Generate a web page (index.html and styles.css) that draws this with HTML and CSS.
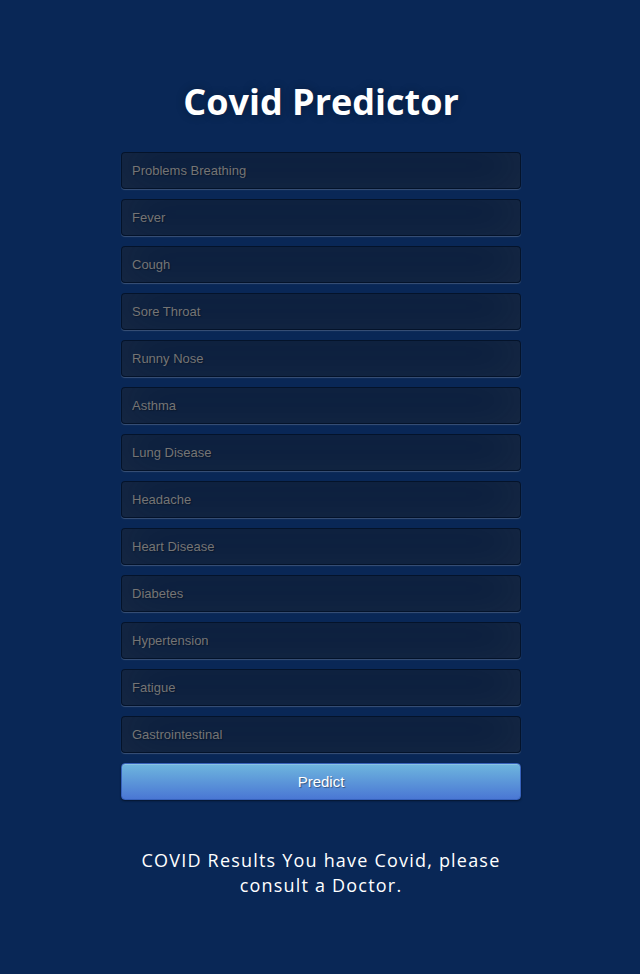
FILE: index.html
```
<!DOCTYPE html>
<html>
<head>
<meta charset="utf-8">
<title>Covid Predictor</title>
<link rel="stylesheet" href="styles.css">
</head>
<body>
<div class="login">
  <h1 class="title">Covid Predictor</h1>
  <form class="form">
    <input class="field" type="text" placeholder="Problems Breathing">
    <input class="field" type="text" placeholder="Fever">
    <input class="field" type="text" placeholder="Cough">
    <input class="field" type="text" placeholder="Sore Throat">
    <input class="field" type="text" placeholder="Runny Nose">
    <input class="field" type="text" placeholder="Asthma">
    <input class="field" type="text" placeholder="Lung Disease">
    <input class="field" type="text" placeholder="Headache">
    <input class="field" type="text" placeholder="Heart Disease">
    <input class="field" type="text" placeholder="Diabetes">
    <input class="field" type="text" placeholder="Hypertension">
    <input class="field" type="text" placeholder="Fatigue">
    <input class="field" type="text" placeholder="Gastrointestinal">
    <button class="btn" type="button">Predict</button>
  </form>
  <p class="result">COVID Results You have Covid, please consult a Doctor.</p>
</div>
</body>
</html>
```
FILE: styles.css
```
html, body {
  margin: 0;
  padding: 0;
  height: 100%;
}
body {
  background: #092756;
  font-family: "Open Sans", sans-serif;
}
.login {
  width: 400px;
  margin: 0 auto;
  padding-top: 78px;
  transform: translateX(1px);
}
.title {
  margin: 0 0 26px;
  color: #fff;
  font-size: 36px;
  font-weight: 700;
  line-height: 48px;
  letter-spacing: 0;
  text-align: center;
  text-shadow: 0 0 10px rgba(0,0,0,0.3);
}
.form {
  display: flex;
  flex-direction: column;
  gap: 10px;
  margin: 0;
}
.field {
  box-sizing: border-box;
  width: 100%;
  height: 37px;
  margin: 0;
  padding: 10px;
  background: rgba(0,0,0,0.3);
  border: 1px solid rgba(0,0,0,0.3);
  border-radius: 4px;
  outline: none;
  font-family: "Liberation Sans", Arial, sans-serif;
  font-size: 13px;
  color: #fff;
  text-shadow: 1px 1px 1px rgba(0,0,0,0.3);
  box-shadow: inset 0 -5px 45px rgba(100,100,100,0.2), 0 1px 1px rgba(255,255,255,0.2);
}
.field::placeholder {
  color: #757575;
}
.btn {
  box-sizing: border-box;
  width: 100%;
  height: 37px;
  margin: 0;
  padding: 0;
  border: 1px solid #3762bc;
  border-radius: 4px;
  background: linear-gradient(#6eb6de, #4a77d4);
  color: #fff;
  font-family: "Liberation Sans", Arial, sans-serif;
  font-size: 15px;
  text-shadow: 1px 1px 1px rgba(0,0,0,0.4);
  box-shadow: inset 0 1px 0 rgba(255,255,255,0.2), 0 1px 2px rgba(0,0,0,0.5);
}
.result {
  margin: 48px 0 0;
  color: #fff;
  font-size: 18px;
  line-height: 25px;
  letter-spacing: 1.2px;
  text-align: center;
}
```
